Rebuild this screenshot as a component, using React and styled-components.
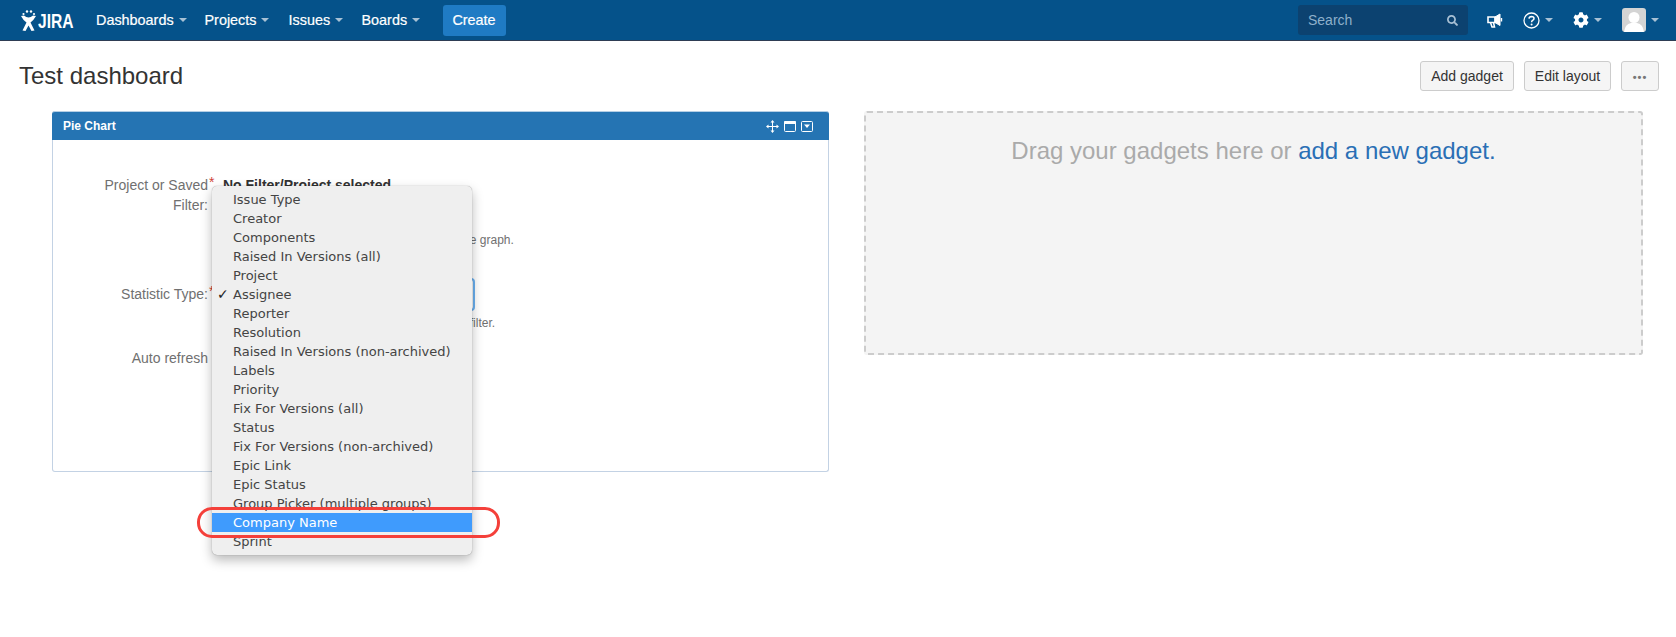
import React from 'react';
import styled, { createGlobalStyle } from 'styled-components';
import { FaCog, FaSearch } from 'react-icons/fa';

const Global = createGlobalStyle`
  html, body { margin: 0; padding: 0; background: #fff; }
  body { font-family: "Liberation Sans", Arial, sans-serif; font-size: 14px; color: #333; }
  * { box-sizing: border-box; }
`;

const Page = styled.div`width: 1676px; height: 637px; overflow: hidden; position: relative;`;
const TopBar = styled.header`
  height: 41px; background: #05528a; border-bottom: 1px solid #2e3d54;
  display: flex; align-items: center; padding: 0 17px 0 21px; color: #fff;
`;
const Logo = styled.div`display: flex; align-items: flex-end; width: 53px; height: 21px; margin-right: 22px; flex: none; svg { flex: none; }`;
const LogoWord = styled.span`
  display: inline-block; font-size: 19.5px; font-weight: 700; margin-left: 2px; line-height: 19px;
  transform: scaleX(0.8); transform-origin: left center;
`;
const NavItem = styled.a`
  display: flex; align-items: center; gap: 5px; margin-right: 14px; font-size: 14.4px; color: #fff;
  width: ${p => p.$w}px; flex: none; -webkit-text-stroke: 0.2px #fff;
`;
const Caret = styled.i`
  display: block; width: 0; height: 0; border-left: 4px solid transparent; border-right: 4px solid transparent;
  border-top: 4px solid #c5d5e2; opacity: .85; flex: none;
`;
const CreateButton = styled.button`
  width: 63px; height: 31px; border: 0; border-radius: 3px; background: #1f7bc4; color: #fff; flex: none;
  font: 14.4px "Liberation Sans", Arial, sans-serif; -webkit-text-stroke: 0.2px #fff; padding: 0;
`;
const Spacer = styled.div`flex: 1;`;
const SearchBox = styled.div`
  width: 170px; height: 30px; background: #0c4270; border-radius: 3px; display: flex; align-items: center;
  justify-content: space-between; padding: 0 10px; color: #8fb0cb; font-size: 14px; margin-right: 19px;
`;
const IconButton = styled.div`display: flex; align-items: center; gap: 5px; margin-right: ${p => p.$mr}px; color: #fff;`;
const Avatar = styled.div`width: 24px; height: 24px; border-radius: 3px; background: #d4d4d4; overflow: hidden;`;

const TitleRow = styled.div`display: flex; align-items: center; justify-content: space-between; padding: 20px 17px 0 19px; height: 71px;`;
const Title = styled.h1`margin: 0; font-size: 24px; font-weight: 400; color: #333; line-height: 30px; position: relative; top: -11px;`;
const Actions = styled.div`display: flex; gap: 10px; position: relative; top: -11px;`;
const ActionButton = styled.button`
  height: 30px; width: ${p => p.$w}px; padding: 0; background: #f5f5f5; border: 1px solid #ccc; border-radius: 3.01px;
  color: #333; font: 14px "Liberation Sans", Arial, sans-serif;
`;
const Dots = styled.span`color: #777; font-size: 11px; letter-spacing: 1px; font-weight: 700;`;

const Columns = styled.div`display: grid; grid-template-columns: 777px 779px; gap: 35px; padding-left: 52px; align-items: start;`;
const Gadget = styled.section`height: 361px; margin-top: -1px; border: 1px solid #c3d2e4; border-top: 0; border-radius: 3px; display: flex; flex-direction: column;`;
const GadgetHead = styled.div`
  height: 29px; margin: 0 -1px; background: #2574b3; border-top: 1px solid #b5cfe5; border-radius: 3px 3px 0 0;
  display: flex; align-items: center; justify-content: space-between; padding: 0 16px 0 11px; color: #fff;
`;
const GadgetTitle = styled.span`font-size: 12px; font-weight: 700;`;
const GadgetIcons = styled.div`display: flex; align-items: center; gap: 5px;`;
const Form = styled.div`padding: 35px 0 0; display: flex; flex-direction: column;`;
const Row = styled.div`display: grid; grid-template-columns: 155px 14px 1fr; height: ${p => p.$h}px; font-size: 14px; line-height: 20px;`;
const Label = styled.label`text-align: right; color: #707070; padding-left: 40px;`;
const Star = styled.span`color: #d04437; font-size: 14px; line-height: 14px; padding-left: 1px;`;
const Field = styled.div`padding-left: 1px;`;
const Strong = styled.strong`display: block; color: #333;`;
const FakeButton = styled.div`height: 30px; width: 248px; border: 1px solid #bbb; border-radius: 3px;`;
const Help = styled.div`font-size: 12px; color: #707070; line-height: 16px; margin-top: ${p => p.$mt}px;`;
const FocusSelect = styled.div`
  width: 252px; height: 33px; margin-top: -6px; border: 2px solid #6ab0f0; border-radius: 4px; background: #fff;
`;

const DropZone = styled.div`
  height: 244px; margin-top: -1px; background: #f4f4f4; border: 2px dashed #ccc; border-radius: 3px; text-align: center;
  font-size: 24px; color: #aaa; padding-top: 23px; line-height: 30px;
`;
const AddLink = styled.a`color: #2a6fb5;`;

const Menu = styled.ul`
  position: absolute; left: 212px; top: 186px; width: 260px; margin: 0; padding: 4px 0; list-style: none;
  background: #efefef; border-radius: 5px; box-shadow: 0 0 1px rgba(0,0,0,.45), 0 5px 12px rgba(0,0,0,.28);
  font-family: "DejaVu Sans", sans-serif; font-size: 13px; color: #444;
`;
const MenuItem = styled.li`
  height: 19px; line-height: 19px; padding-left: 21px; position: relative; white-space: nowrap;
  background: ${p => p.$active ? '#3f9bfd' : 'transparent'}; color: ${p => p.$active ? '#fff' : '#444'};
`;
const Check = styled.span`position: absolute; left: 5px; top: 0; font-size: 14px; font-weight: 700; color: #222;`;
const Callout = styled.div`
  position: absolute; left: 197px; top: 507px; width: 303px; height: 31px;
  border: 3.5px solid #f4403a; border-radius: 15px; pointer-events: none;
`;

const items = ['Issue Type','Creator','Components','Raised In Versions (all)','Project','Assignee','Reporter','Resolution','Raised In Versions (non-archived)','Labels','Priority','Fix For Versions (all)','Status','Fix For Versions (non-archived)','Epic Link','Epic Status','Group Picker (multiple groups)','Company Name','Sprint'];

const JiraMark = () => (
  <svg width="15" height="21" viewBox="0 0 15 21" fill="#fff">
    <circle cx="2.5" cy="4" r="1.1" /><circle cx="6" cy="1.5" r="1.2" /><circle cx="10" cy="1.5" r="1.2" /><circle cx="13" cy="4" r="1.1" />
    <path d="M0 6 L3 5.5 Q7.5 9.5 12 5.5 L15 6 Q12.5 10.5 9.5 12.5 L13.5 20.5 L10.5 21 L7.5 15.5 L4.5 21 L1.5 20.5 L5.5 12.5 Q2 10 0 6 Z" />
  </svg>
);
const Megaphone = () => (
  <svg width="16" height="15" viewBox="0 0 16 15" fill="none" stroke="#fff">
    <path d="M1 4 H8 V9.5 H1 Z" strokeWidth="1.6" />
    <path d="M8 4 L13 1 V12.5 L8 9.5 Z" fill="#fff" strokeWidth="1" />
    <path d="M3.5 9.5 L5 14 H7.5 L6.5 9.5" strokeWidth="1.5" />
    <path d="M14.5 5 V8.5" strokeWidth="1.4" />
  </svg>
);
const Help2 = () => (
  <svg width="17" height="17" viewBox="0 0 17 17">
    <circle cx="8.5" cy="8.5" r="7.5" fill="none" stroke="#fff" strokeWidth="1.3" />
    <path d="M6 6.6 Q6.2 4.4 8.5 4.4 Q11 4.5 11 6.4 Q11 7.6 9.6 8.4 Q8.6 9 8.6 10.2" fill="none" stroke="#fff" strokeWidth="1.5" />
    <circle cx="8.6" cy="12.6" r="1" fill="#fff" />
  </svg>
);
const AvatarFig = () => (
  <svg width="24" height="24" viewBox="0 0 24 24"><circle cx="12" cy="9.5" r="5.5" fill="#fff" /><path d="M2 24 Q3 16 9 15 H15 Q21 16 22 24 Z" fill="#fff" /></svg>
);
const MoveIcon = () => (
  <svg width="13" height="13" viewBox="0 0 13 13" fill="#fff" stroke="#fff">
    <path d="M6.5 1 V12 M1 6.5 H12" strokeWidth="1" fill="none" />
    <path d="M6.5 0 L8.5 2.5 H4.5 Z M6.5 13 L4.5 10.5 H8.5 Z M0 6.5 L2.5 4.5 V8.5 Z M13 6.5 L10.5 8.5 V4.5 Z" strokeWidth="0" />
  </svg>
);
const WindowIcon = () => (
  <svg width="12" height="11" viewBox="0 0 12 11"><rect x=".5" y=".5" width="11" height="10" rx="1" fill="none" stroke="#fff" /><rect x="0" y="0" width="12" height="3" rx="1" fill="#fff" /></svg>
);
const MenuIcon = () => (
  <svg width="12" height="11" viewBox="0 0 12 11"><rect x=".5" y=".5" width="11" height="10" rx="1" fill="none" stroke="#fff" /><path d="M3 3.5 H9 L6 7 Z" fill="#fff" /></svg>
);

export default function App() {
  return (
    <Page>
      <Global />
      <TopBar>
        <Logo><JiraMark /><LogoWord>JIRA</LogoWord></Logo>
        <NavItem $w={94.5}>Dashboards<Caret /></NavItem>
        <NavItem $w={70}>Projects<Caret /></NavItem>
        <NavItem $w={59}>Issues<Caret /></NavItem>
        <NavItem $w={67}>Boards<Caret /></NavItem>
        <CreateButton>Create</CreateButton>
        <Spacer />
        <SearchBox>Search<FaSearch size={11} color="#a9c0d4" /></SearchBox>
        <IconButton $mr={20}><Megaphone /></IconButton>
        <IconButton $mr={20}><Help2 /><Caret /></IconButton>
        <IconButton $mr={20}><FaCog size={16} /><Caret /></IconButton>
        <IconButton $mr={0}><Avatar><AvatarFig /></Avatar><Caret /></IconButton>
      </TopBar>
      <TitleRow>
        <Title>Test dashboard</Title>
        <Actions>
          <ActionButton $w={94}>Add gadget</ActionButton>
          <ActionButton $w={87}>Edit layout</ActionButton>
          <ActionButton $w={38}><Dots>•••</Dots></ActionButton>
        </Actions>
      </TitleRow>
      <Columns>
        <Gadget>
          <GadgetHead>
            <GadgetTitle>Pie Chart</GadgetTitle>
            <GadgetIcons><MoveIcon /><WindowIcon /><MenuIcon /></GadgetIcons>
          </GadgetHead>
          <Form>
            <Row $h={109}>
              <Label>Project or Saved Filter:</Label><Star>*</Star>
              <Field>
                <Strong>No Filter/Project selected</Strong>
                <FakeButton />
                <Help $mt={7}>Project or saved filter to use as the basis for the graph.</Help>
              </Field>
            </Row>
            <Row $h={64}>
              <Label>Statistic Type:</Label><Star>*</Star>
              <Field>
                <FocusSelect />
                <Help $mt={4}>Select which type of statistic to display for this filter.</Help>
              </Field>
            </Row>
            <Row $h={40}>
              <Label>Auto refresh</Label><Star />
              <Field>Update every 15 minutes</Field>
            </Row>
          </Form>
        </Gadget>
        <DropZone>Drag your gadgets here or <AddLink>add a new gadget.</AddLink></DropZone>
      </Columns>
      <Menu>
        {items.map(t => (
          <MenuItem key={t} $active={t === 'Company Name'}>
            {t === 'Assignee' && <Check>✓</Check>}{t}
          </MenuItem>
        ))}
      </Menu>
      <Callout />
    </Page>
  );
}
